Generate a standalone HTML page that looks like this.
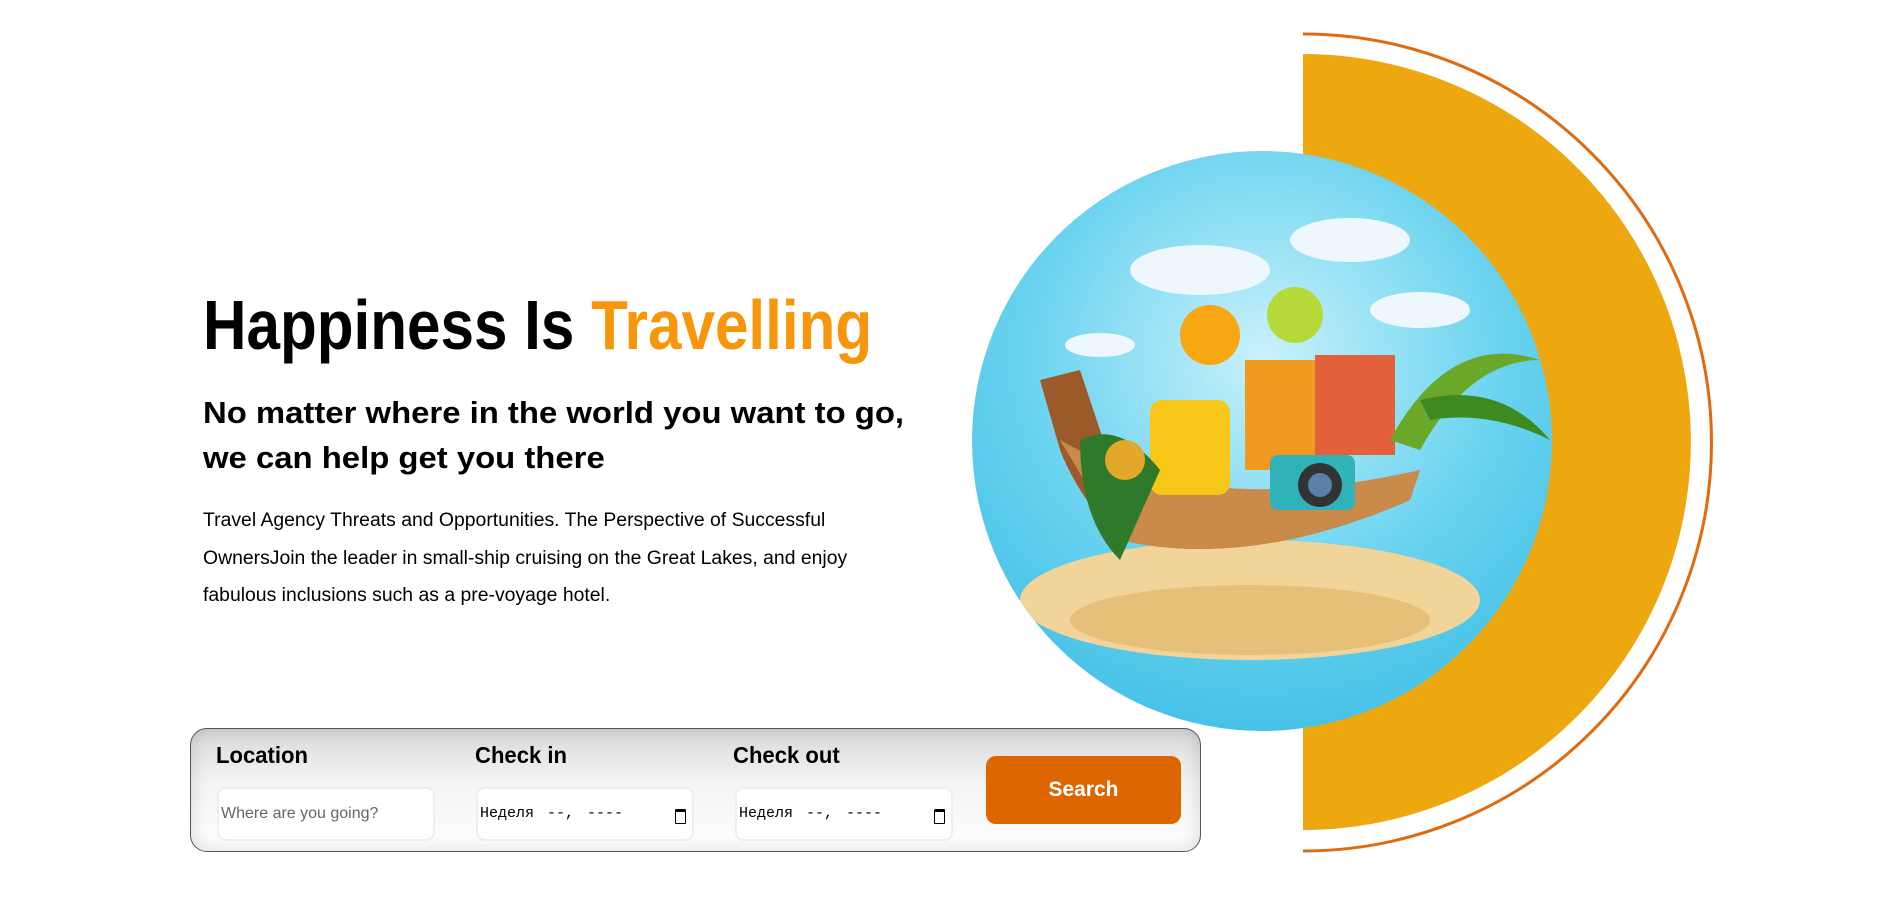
<!DOCTYPE html>
<html><head><meta charset="utf-8"><style>
html,body{margin:0;padding:0;width:1895px;height:915px;background:#fff;overflow:hidden;font-family:"Liberation Sans",sans-serif;}
.abs{position:absolute;}
h1{position:absolute;left:203px;top:285px;margin:0;font-size:70px;font-weight:bold;line-height:80px;white-space:nowrap;transform:scaleX(0.86);transform-origin:left top;color:#000;}
h1 span{color:#f7960a;}
h2{position:absolute;left:203px;top:390px;margin:0;font-size:31px;line-height:45px;font-weight:bold;white-space:nowrap;transform:scaleX(1.06);transform-origin:left top;}
p{position:absolute;left:203px;top:502px;margin:0;font-size:19px;line-height:37.5px;white-space:nowrap;transform:scaleX(1.02);transform-origin:left top;}
.bar{position:absolute;left:190px;top:728px;width:1009px;height:122px;border:1px solid #555;border-radius:17px;background:linear-gradient(#d9d9d9,#f4f4f4 45%,#fff);box-shadow:inset 0 0 18px rgba(0,0,0,.15);}
.lbl{position:absolute;top:742px;font-size:23px;font-weight:bold;transform:scaleX(0.96);transform-origin:left top;}
.inp{position:absolute;top:787px;width:218px;height:54px;background:#fff;border:2px solid #eee;border-radius:9px;box-sizing:border-box;font-size:16px;line-height:50px;padding-left:2px;}
.date{font-family:"Liberation Mono",monospace;font-size:15px;color:#000;word-spacing:4px;}
.cal{position:absolute;right:6px;top:20px;width:9px;height:11px;border:1.5px solid #000;border-top-width:3px;border-radius:1px;}
.btn{position:absolute;left:986px;top:756px;width:195px;height:68px;background:#dd6600;border-radius:10px;color:#fff;font-weight:bold;font-size:21px;text-align:center;line-height:68px;}
</style></head><body>
<svg class="abs" style="left:0;top:0" width="1895" height="915">
<path d="M1303 54 A388 388 0 0 1 1303 830 Z" fill="#eda80f"/>
<path d="M1303 34 A408 408 0 0 1 1303 851" fill="none" stroke="#e06a10" stroke-width="3"/>
<defs>
<radialGradient id="sky" cx="50%" cy="35%" r="65%"><stop offset="0" stop-color="#c9f1fb"/><stop offset="0.6" stop-color="#6ad3ef"/><stop offset="1" stop-color="#45c1e6"/></radialGradient>
<clipPath id="cc"><circle cx="1262" cy="441" r="290"/></clipPath>
</defs>
<g clip-path="url(#cc)">
<rect x="960" y="150" width="610" height="590" fill="url(#sky)"/>
<ellipse cx="1200" cy="270" rx="70" ry="25" fill="#eef8fc"/>
<ellipse cx="1350" cy="240" rx="60" ry="22" fill="#eef8fc"/>
<ellipse cx="1420" cy="310" rx="50" ry="18" fill="#eef8fc"/>
<ellipse cx="1100" cy="345" rx="35" ry="12" fill="#eef8fc"/>
<ellipse cx="1250" cy="600" rx="230" ry="60" fill="#f1d49a"/>
<ellipse cx="1250" cy="620" rx="180" ry="35" fill="#e6c078"/>
<path d="M1040 380 L1080 370 L1110 460 Q1200 540 1420 470 L1410 500 Q1250 570 1120 540 Q1080 500 1060 450 Z" fill="#9c5a2a"/>
<path d="M1060 440 Q1200 520 1420 470 L1410 500 Q1250 570 1120 540 Z" fill="#c98a4a"/>
<rect x="1150" y="400" width="80" height="95" rx="12" fill="#f7c81a"/>
<rect x="1245" y="360" width="70" height="110" fill="#f19a20"/>
<rect x="1315" y="355" width="80" height="100" fill="#e2603a"/>
<circle cx="1210" cy="335" r="30" fill="#f7a614"/>
<circle cx="1295" cy="315" r="28" fill="#b6d93a"/>
<rect x="1270" y="455" width="85" height="55" rx="8" fill="#2fb3b8"/>
<circle cx="1320" cy="485" r="22" fill="#333"/>
<circle cx="1320" cy="485" r="12" fill="#5a7fa8"/>
<path d="M1390 440 Q1450 330 1540 360 Q1470 360 1420 450 Z" fill="#6aa82a"/>
<path d="M1420 400 Q1500 380 1550 440 Q1490 410 1430 420 Z" fill="#3f8a20"/>
<path d="M1080 440 Q1120 420 1160 470 L1120 560 Q1080 520 1080 440Z" fill="#2f7a2a"/>
<circle cx="1125" cy="460" r="20" fill="#e3a72a"/>
</g>
</svg>
<h1>Happiness Is <span>Travelling</span></h1>
<h2>No matter where in the world you want to go,<br>we can help get you there</h2>
<p>Travel Agency Threats and Opportunities. The Perspective of Successful<br>OwnersJoin the leader in small-ship cruising on the Great Lakes, and enjoy<br>fabulous inclusions such as a pre-voyage hotel.</p>
<div class="bar"></div>
<div class="lbl" style="left:216px">Location</div>
<div class="lbl" style="left:475px">Check in</div>
<div class="lbl" style="left:733px">Check out</div>
<div class="inp" style="left:217px;color:#666">Where are you going?</div>
<div class="inp date" style="left:476px">Неделя --, ----<span class="cal"></span></div>
<div class="inp date" style="left:735px">Неделя --, ----<span class="cal"></span></div>
<div class="btn">Search</div>
</body></html>
